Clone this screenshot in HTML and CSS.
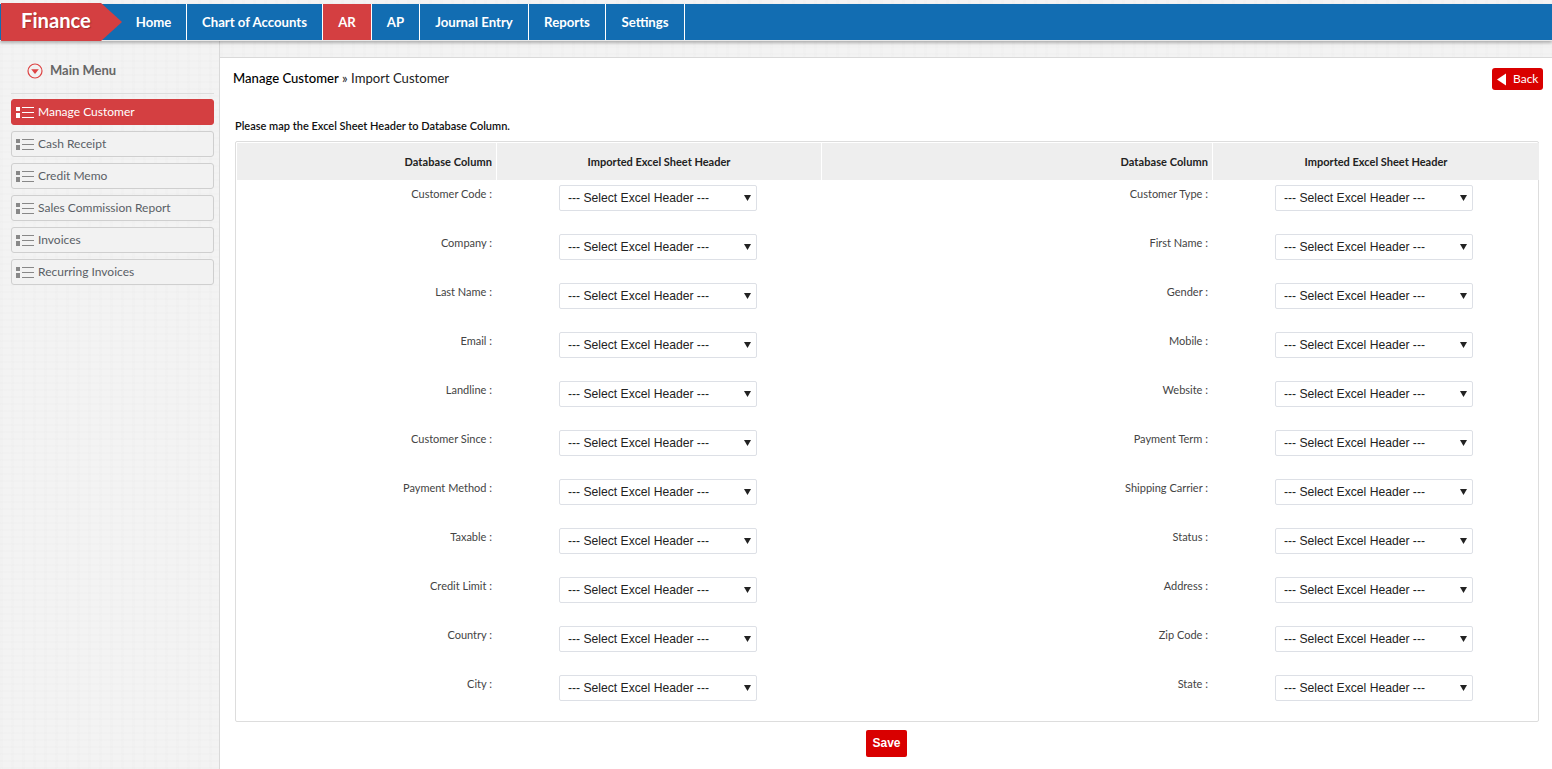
FILE: index.html
```html
<!DOCTYPE html>
<html lang="en">
<head>
<meta charset="utf-8">
<title>Import Customer</title>
<link rel="stylesheet" href="styles.css">
</head>
<body>
<header class="topbar">
  <div class="brand">Finance</div>
  <nav class="nav">
    <a class="nav-item">Home</a>
    <a class="nav-item">Chart of Accounts</a>
    <a class="nav-item active">AR</a>
    <a class="nav-item">AP</a>
    <a class="nav-item">Journal Entry</a>
    <a class="nav-item">Reports</a>
    <a class="nav-item">Settings</a>
  </nav>
</header>
<div class="page">
  <aside class="sidebar">
    <div class="menu-title">
      <svg class="menu-arrow" viewBox="0 0 16 16"><circle cx="8" cy="8" r="7" fill="none" stroke="#d44" stroke-width="1.2"/><path d="M4.2 6.2h7.6L8 11z" fill="#d44"/></svg>
      <span>Main Menu</span>
    </div>
    <ul class="menu">
      <li class="menu-item active"><svg class="list-icon" viewBox="0 0 18 14"><path d="M0 2h4v4H0zM0 8h4v5H0z" fill="currentColor"/><path d="M6 2.500h12M6 7.500h12M6 12.500h12" stroke="currentColor" stroke-width="1" fill="none"/></svg>Manage Customer</li>
      <li class="menu-item"><svg class="list-icon" viewBox="0 0 18 14"><path d="M0 2h4v4H0zM0 8h4v5H0z" fill="currentColor"/><path d="M6 2.500h12M6 7.500h12M6 12.500h12" stroke="currentColor" stroke-width="1" fill="none"/></svg>Cash Receipt</li>
      <li class="menu-item"><svg class="list-icon" viewBox="0 0 18 14"><path d="M0 2h4v4H0zM0 8h4v5H0z" fill="currentColor"/><path d="M6 2.500h12M6 7.500h12M6 12.500h12" stroke="currentColor" stroke-width="1" fill="none"/></svg>Credit Memo</li>
      <li class="menu-item"><svg class="list-icon" viewBox="0 0 18 14"><path d="M0 2h4v4H0zM0 8h4v5H0z" fill="currentColor"/><path d="M6 2.500h12M6 7.500h12M6 12.500h12" stroke="currentColor" stroke-width="1" fill="none"/></svg>Sales Commission Report</li>
      <li class="menu-item"><svg class="list-icon" viewBox="0 0 18 14"><path d="M0 2h4v4H0zM0 8h4v5H0z" fill="currentColor"/><path d="M6 2.500h12M6 7.500h12M6 12.500h12" stroke="currentColor" stroke-width="1" fill="none"/></svg>Invoices</li>
      <li class="menu-item"><svg class="list-icon" viewBox="0 0 18 14"><path d="M0 2h4v4H0zM0 8h4v5H0z" fill="currentColor"/><path d="M6 2.500h12M6 7.500h12M6 12.500h12" stroke="currentColor" stroke-width="1" fill="none"/></svg>Recurring Invoices</li>
    </ul>
  </aside>
  <main class="content">
    <div class="title-row">
      <div class="crumb"><b>Manage Customer</b> » Import Customer</div>
      <button class="back"><svg class="back-arrow" viewBox="0 0 9 12"><path d="M9 0v12L0 6z" fill="#fff"/></svg>Back</button>
    </div>
    <p class="note">Please map the Excel Sheet Header to Database Column.</p>
    <div class="map">
      <div class="th right">Database Column</div><div class="th">Imported Excel Sheet Header</div><div class="th right">Database Column</div><div class="th">Imported Excel Sheet Header</div>
      <label class="lbl">Customer Code :</label><div class="cell"><select class="pick"><option>--- Select Excel Header ---</option></select></div><label class="lbl">Customer Type :</label><div class="cell"><select class="pick"><option>--- Select Excel Header ---</option></select></div>
      <label class="lbl">Company :</label><div class="cell"><select class="pick"><option>--- Select Excel Header ---</option></select></div><label class="lbl">First Name :</label><div class="cell"><select class="pick"><option>--- Select Excel Header ---</option></select></div>
      <label class="lbl">Last Name :</label><div class="cell"><select class="pick"><option>--- Select Excel Header ---</option></select></div><label class="lbl">Gender :</label><div class="cell"><select class="pick"><option>--- Select Excel Header ---</option></select></div>
      <label class="lbl">Email :</label><div class="cell"><select class="pick"><option>--- Select Excel Header ---</option></select></div><label class="lbl">Mobile :</label><div class="cell"><select class="pick"><option>--- Select Excel Header ---</option></select></div>
      <label class="lbl">Landline :</label><div class="cell"><select class="pick"><option>--- Select Excel Header ---</option></select></div><label class="lbl">Website :</label><div class="cell"><select class="pick"><option>--- Select Excel Header ---</option></select></div>
      <label class="lbl">Customer Since :</label><div class="cell"><select class="pick"><option>--- Select Excel Header ---</option></select></div><label class="lbl">Payment Term :</label><div class="cell"><select class="pick"><option>--- Select Excel Header ---</option></select></div>
      <label class="lbl">Payment Method :</label><div class="cell"><select class="pick"><option>--- Select Excel Header ---</option></select></div><label class="lbl">Shipping Carrier :</label><div class="cell"><select class="pick"><option>--- Select Excel Header ---</option></select></div>
      <label class="lbl">Taxable :</label><div class="cell"><select class="pick"><option>--- Select Excel Header ---</option></select></div><label class="lbl">Status :</label><div class="cell"><select class="pick"><option>--- Select Excel Header ---</option></select></div>
      <label class="lbl">Credit Limit :</label><div class="cell"><select class="pick"><option>--- Select Excel Header ---</option></select></div><label class="lbl">Address :</label><div class="cell"><select class="pick"><option>--- Select Excel Header ---</option></select></div>
      <label class="lbl">Country :</label><div class="cell"><select class="pick"><option>--- Select Excel Header ---</option></select></div><label class="lbl">Zip Code :</label><div class="cell"><select class="pick"><option>--- Select Excel Header ---</option></select></div>
      <label class="lbl">City :</label><div class="cell"><select class="pick"><option>--- Select Excel Header ---</option></select></div><label class="lbl">State :</label><div class="cell"><select class="pick"><option>--- Select Excel Header ---</option></select></div>
    </div>
    <div class="actions"><button class="save">Save</button></div>
  </main>
</div>
</body>
</html>
```
FILE: styles.css
```css
* { box-sizing: border-box; }
html, body { height: 100%; }
body {
  margin: 0;
  height: 769px;
  overflow: hidden;
  display: flex;
  flex-direction: column;
  font-family: Lato, "Liberation Sans", sans-serif;
  color: #111;
  background-color: #f3f3f3;
  background-image:
    repeating-linear-gradient(0deg, rgba(0,0,0,.008) 0 2px, transparent 2px 7px),
    repeating-linear-gradient(90deg, rgba(0,0,0,.008) 0 3px, transparent 3px 11px);
}
.topbar {
  flex: none;
  height: 37px;
  margin-top: 4px;
  display: flex;
  background: #126db2;
  border-bottom: 1px solid #e8e8e8;
  box-shadow: 0 2px 3px rgba(0,0,0,.28);
  position: relative;
}
.brand {
  flex: none;
  width: 100px;
  height: 38px;
  margin: -1px 0 0 1px;
  padding: 0 0 5px 20px;
  display: flex;
  align-items: center;
  position: relative;
  background: #d43f41;
  color: #fff;
  font-size: 20.200px;
  font-weight: 700;
  text-shadow: 1px 1px 1px rgba(0,0,0,.25);
}
.brand::after {
  content: "";
  position: absolute;
  left: 100px;
  top: 0;
  border-left: 21px solid #d43f41;
  border-top: 19px solid transparent;
  border-bottom: 19px solid transparent;
}
.nav {
  display: grid;
  grid-template-columns: 66px 136px 49px 48px 109px 77px 79px;
  padding-left: 20px;
  height: 36px;
}
.nav-item {
  display: flex;
  align-items: center;
  justify-content: center;
  border-right: 1px solid #fff;
  color: #fff;
  font-size: 13.200px;
  font-weight: 700;
}
.nav-item.active { background: #d43f41; }
.page {
  flex: 1;
  min-height: 0;
  display: flex;
}
.sidebar {
  flex: none;
  width: 220px;
  padding: 0 5px 0 11px;
  border-right: 1px solid #d9d9d9;
}
.menu-title {
  height: 53px;
  padding: 12px 0 0 16px;
  display: flex;
  align-items: center;
  gap: 7px;
  border-bottom: 1px solid #ddd;
  color: #666;
  font-size: 13px;
  font-weight: 700;
}
.menu-title span { position: relative; top: -3px; }
.menu-arrow { width: 16px; height: 16px; position: relative; top: -2px; }
.menu {
  list-style: none;
  margin: 5px 0 0;
  padding: 0;
  display: flex;
  flex-direction: column;
  gap: 6px;
}
.menu-item {
  height: 26px;
  display: flex;
  align-items: center;
  gap: 4px;
  padding: 0 0 2px 4px;
  border: 1px solid #cfcfcf;
  border-radius: 3px;
  background: #f2f2f2;
  color: #5a5f66;
  font-size: 12px;
}
.menu-item.active {
  background: #d43f41;
  border-color: #d43f41;
  color: #fff;
}
.list-icon { width: 18px; height: 14px; color: #888; flex: none; position: relative; top: 1px; }
.active .list-icon { color: #fff; }
.content {
  flex: 1;
  min-width: 0;
  margin-top: 16px;
  padding: 0 9px 0 15px;
  background: #fff;
  border-top: 1px solid #d9d9d9;
}
.title-row {
  display: flex;
  justify-content: space-between;
  padding-top: 10px;
  height: 60px;
}
.crumb {
  margin-left: -2px;
  font-size: 13.100px;
  line-height: 20px;
  color: #222;
}
.crumb b { font-weight: 500; color: #000; }
.back {
  height: 22px;
  width: 51px;
  padding: 0 0 2px 5px;
  border: 0;
  border-radius: 3px;
  background: #d90000;
  color: #fff;
  font: 12px Lato, sans-serif;
  display: flex;
  align-items: center;
  gap: 7px;
}
.back-arrow { width: 9px; height: 13px; position: relative; top: 1px; }
.note {
  margin: 0;
  font-size: 11px;
  line-height: 16px;
  font-weight: 600;
  color: #111;
}
.map {
  margin-top: 7px;
  width: 1304px;
  height: 581px;
  padding: 1px;
  border: 1px solid #ddd;
  border-radius: 2px;
  display: grid;
  grid-template-columns: 260px 325px 391px 326px;
  grid-template-rows: 37px repeat(11, 49px);
  align-content: start;
}
.th {
  background: #eee;
  border-right: 1px solid #fff;
  font-size: 11px;
  font-weight: 700;
  display: flex;
  align-items: center;
  justify-content: center;
  color: #222;
}
.th:nth-child(4) { border-right: 0; }
.th.right { justify-content: flex-end; padding-right: 4px; letter-spacing: .07px; }
.lbl {
  text-align: right;
  padding: 7px 5px 0 0;
  font-size: 11px;
  line-height: 14px;
  color: #444;
}
.cell {
  display: flex;
  padding: 5px 0 0 62px;
}
.pick {
  appearance: none;
  width: 198px;
  height: 26px;
  padding: 0 8px;
  border: 1px solid #dde0e6;
  border-radius: 2px;
  background: #fff url("data:image/svg+xml,%3Csvg xmlns='http://www.w3.org/2000/svg' width='7' height='6'%3E%3Cpath d='M0 0h7L3.500 6z' fill='%23222'/%3E%3C/svg%3E") no-repeat 184px 9px;
  color: #222;
  font-family: "Liberation Sans", Arial, sans-serif;
  font-size: 12.150px;
}
.actions {
  display: flex;
  justify-content: center;
  margin-top: 8px;
  padding-right: 5px;
}
.save {
  width: 41px;
  height: 27px;
  padding: 0 0 2px;
  border: 0;
  border-radius: 2px;
  background: #d90000;
  color: #fff;
  font: 700 12px "Liberation Sans", sans-serif;
}
```
